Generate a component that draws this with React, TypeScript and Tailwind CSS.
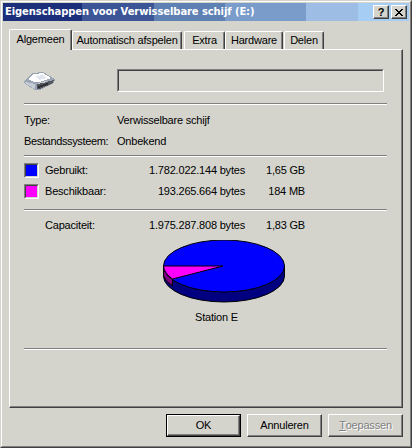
import React from 'react';

const Separator = () => <div className="h-[2px] border-t border-b border-t-[#808080] border-b-white" />;

const Row = ({ children }: { children: React.ReactNode }) => (
  <div className="flex items-center h-[21px] whitespace-nowrap">{children}</div>
);

const Swatch = ({ color }: { color: string }) => (
  <div className="w-[15px] h-[15px] border border-t-[#808080] border-l-[#808080] border-b-white border-r-white">
    <div className={`w-full h-full border border-t-[#404040] border-l-[#404040] border-b-[#d4d4cd] border-r-[#d4d4cd] ${color}`} />
  </div>
);

const CapacityRow = ({ label, bytes, size }: { label: string; bytes: string; size: string }) => (
  <Row>
    <div className="w-[21px]" />
    <div className="w-[90px]">{label}</div>
    <div className="w-[110px] text-right">{bytes}</div>
    <div className="w-[60px] text-right">{size}</div>
  </Row>
);

const Tab = ({ label, active, className }: { label: string; active?: boolean; className: string }) => (
  <div
    className={`relative flex justify-center whitespace-nowrap border-t border-l border-r rounded-t-[2px] border-t-white border-l-white border-r-[#404040] shadow-[inset_-1px_0_0_#808080] bg-[#d4d4cd] ${
      active ? 'h-[21px] -mb-px z-10 pt-[4px]' : 'h-[18px] pt-[3px]'
    } ${className}`}
  >
    {label}
  </div>
);

const Button = ({ children, primary, className }: { children: React.ReactNode; primary?: boolean; className?: string }) => (
  <div className={`w-[75px] h-[23px] ${primary ? 'border border-black' : ''}`}>
    <div className={`h-full flex items-center justify-center border border-t-white border-l-white border-b-[#404040] border-r-[#404040] shadow-[inset_-1px_-1px_0_#808080] ${className ?? ''}`}>
      {children}
    </div>
  </div>
);

const DriveIcon = () => (
  <svg width="32" height="18" viewBox="0 0 32 18" shapeRendering="crispEdges">
    <path d="M0 9 L9 1 L19 0 L31 7 L30 11 L16 18 L11 18 L0 11 Z" fill="#9aa4b2" />
    <path d="M4 7 L10 2 L19 1 L27 6 L16 10 L10 10 Z" fill="#ffffff" />
    <path d="M12 4 L19 3 L23 6 L15 8 Z" fill="#dfe6f0" />
    <path d="M1 10 L11 12 L11 17 L1 11 Z" fill="#c4ccd6" />
    <path d="M13 12 L30 8 L29 11 L16 17 L13 17 Z" fill="#54575c" />
    <path d="M14 14 L24 11 L24 13 L14 16 Z" fill="#2e3034" />
    <path d="M14 11 L22 9 L23 10 L14 12 Z" fill="#c8ccd0" />
  </svg>
);

const PieChart = () => (
  <svg width="123" height="63" viewBox="0 0 123 63">
    {/* side wall */}
    <path d="M0.5 26 V36 A60.5 26 0 0 0 121.5 36 V26 Z" fill="#000080" stroke="#000" strokeWidth="1" />
    <path d="M0.5 26 V36 Q3 42 9.5 46 V36 Z" fill="#800080" stroke="#000" strokeWidth="1" />
    {/* top */}
    <ellipse cx="61" cy="26" rx="60.5" ry="26" fill="#0000ff" stroke="#000" strokeWidth="1" />
    <path d="M60 26 L0.5 26 A60.5 26 0 0 0 9.5 39 Z" fill="#ff00ff" stroke="#000" strokeWidth="1" />
  </svg>
);

export default function App() {
  return (
    <div className="w-[412px] h-[448px] border border-t-[#d4d4cd] border-l-[#d4d4cd] border-r-[#404040] border-b-[#404040] bg-[#d4d4cd] text-[11px] tracking-[-0.2px] text-black font-['Liberation_Sans',sans-serif] leading-none overflow-hidden">
      <div className="h-full flex flex-col border border-t-white border-l-white border-r-[#808080] border-b-[#808080] p-px">
        {/* Title bar */}
        <div className="h-[18px] flex items-center justify-between pl-[2px] pr-[2px] bg-[linear-gradient(90deg,#1c2f7a_0,#1c2f7a_79px,#3c5597_79px,#3c5597_151px,#5f80b3_151px,#5f80b3_222px,#7a9ccb_222px,#7a9ccb_303px,#9dbde5_303px,#9dbde5_355px,#a6cef5_355px)]">
          <span className="font-['DejaVu_Sans',sans-serif] text-[10px] tracking-[-0.1px] font-bold text-white whitespace-nowrap">Eigenschappen voor Verwisselbare schijf (E:)</span>
          <div className="flex items-center gap-[2px]">
            <div className="w-[16px] h-[14px] flex items-center justify-center bg-[#d4d4cd] border border-t-white border-l-white border-b-[#404040] border-r-[#404040] shadow-[inset_-1px_-1px_0_#808080] font-bold text-[11px]">?</div>
            <div className="w-[16px] h-[14px] flex items-center justify-center bg-[#d4d4cd] border border-t-white border-l-white border-b-[#404040] border-r-[#404040] shadow-[inset_-1px_-1px_0_#808080]">
              <svg width="8" height="7" viewBox="0 0 8 7" shapeRendering="crispEdges">
                <path d="M0 0h2v1h1v1h2V1h1V0h2v1H7v1H6v1H5v1h1v1h1v1h1v1H6V6H5V5H3v1H2v1H0V6h1V5h1V4h1V3H2V2H1V1H0z" fill="#000" />
              </svg>
            </div>
          </div>
        </div>

        {/* Tabs */}
        <div className="flex items-end pt-[8px] px-[6px]">
          <Tab label="Algemeen" active className="w-[63px]" />
          <Tab label="Automatisch afspelen" className="w-[110px]" />
          <Tab label="Extra" className="w-[41px] ml-[2px]" />
          <Tab label="Hardware" className="w-[58px]" />
          <Tab label="Delen" className="w-[40px] ml-px" />
        </div>

        {/* Tab panel */}
        <div className="flex-1 mx-[6px] flex flex-col border border-t-white border-l-white border-b-[#404040] border-r-[#404040] shadow-[inset_-1px_-1px_0_#808080] pl-[14px] pr-[15px]">
          <div className="flex items-center mt-[19px] h-[23px]">
            <div className="w-[93px] flex">
              <DriveIcon />
            </div>
            <div className="w-[267px] h-[23px] border border-t-[#808080] border-l-[#808080] border-b-white border-r-white">
              <div className="h-full border border-t-[#404040] border-l-[#404040] border-b-[#d4d4cd] border-r-[#d4d4cd]" />
            </div>
          </div>

          <div className="mt-[11px]">
            <Separator />
          </div>

          <div className="mt-[5px]">
            <Row>
              <div className="w-[93px]">Type:</div>
              <div>Verwisselbare schijf</div>
            </Row>
            <Row>
              <div className="w-[93px] tracking-[-0.35px]">Bestandssysteem:</div>
              <div>Onbekend</div>
            </Row>
          </div>

          <div className="mt-[3px]">
            <Separator />
          </div>

          <div className="mt-[3px]">
            <div className="relative">
              <CapacityRow label="Gebruikt:" bytes="1.782.022.144 bytes" size="1,65 GB" />
              <div className="absolute left-0 top-[3px]">
                <Swatch color="bg-[#0000ff]" />
              </div>
            </div>
            <div className="relative">
              <CapacityRow label="Beschikbaar:" bytes="193.265.664 bytes" size="184 MB" />
              <div className="absolute left-0 top-[3px]">
                <Swatch color="bg-[#ff00ff]" />
              </div>
            </div>
          </div>

          <div className="mt-[7px]">
            <Separator />
          </div>

          <div className="mt-[4px]">
            <CapacityRow label="Capaciteit:" bytes="1.975.287.808 bytes" size="1,83 GB" />
          </div>

          <div className="mt-[4px] ml-[139px]">
            <PieChart />
          </div>

          <div className="mt-[4px] ml-[131px] w-[123px] h-[21px] flex items-center justify-center">Station E</div>

          <div className="mt-[20px]">
            <Separator />
          </div>
        </div>

        {/* Buttons */}
        <div className="flex justify-end gap-[6px] pt-[6px] pb-[8px] pr-[6px]">
          <Button primary>OK</Button>
          <Button>Annuleren</Button>
          <Button className="text-[#808080] [text-shadow:1px_1px_0_#fff]">
            <span className="underline">T</span>oepassen
          </Button>
        </div>
      </div>
    </div>
  );
}
